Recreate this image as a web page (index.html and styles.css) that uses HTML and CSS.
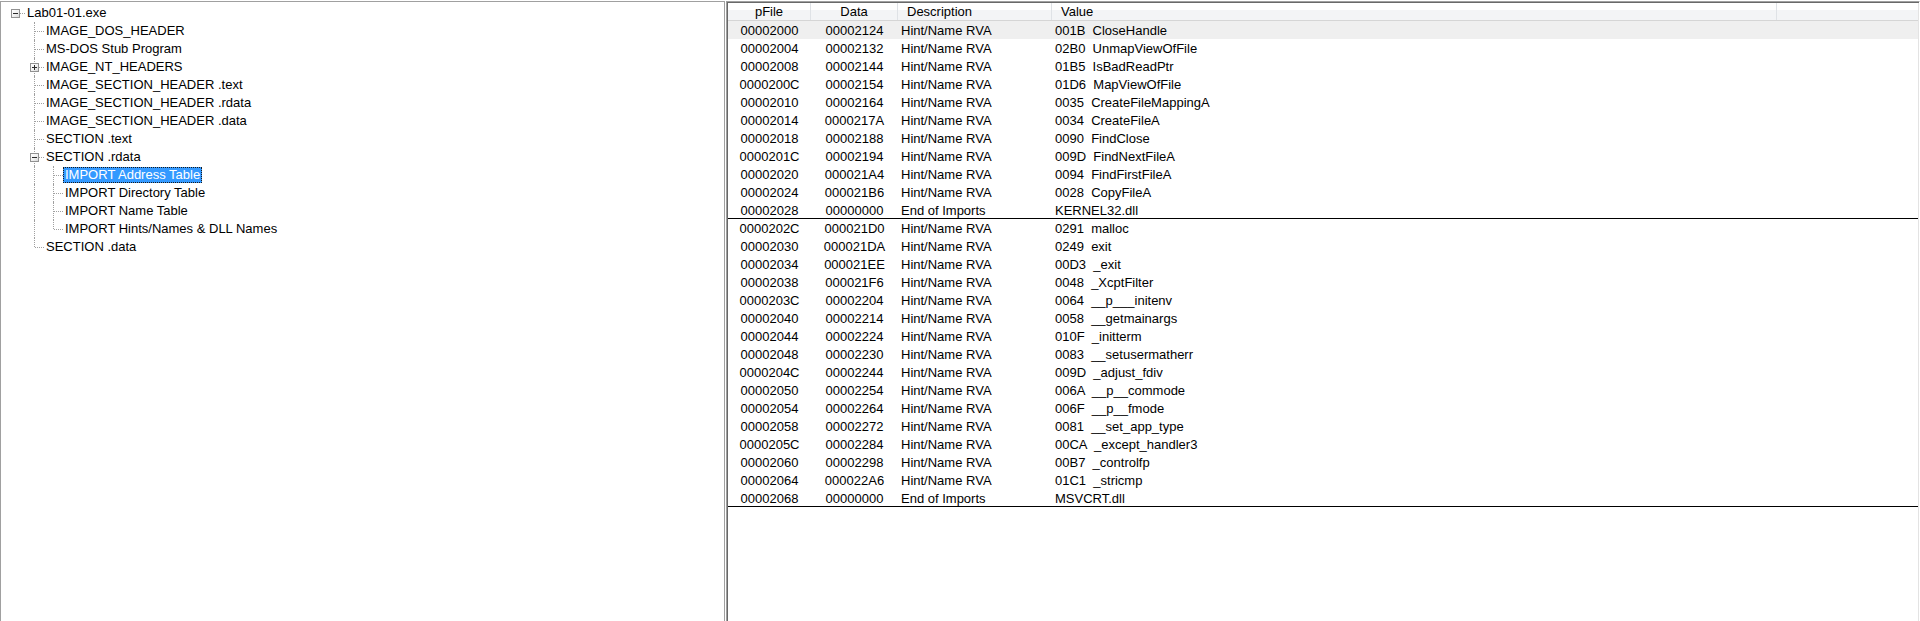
FILE: index.html
```html
<!DOCTYPE html>
<html>
<head>
<meta charset="utf-8">
<link rel="stylesheet" href="styles.css">
</head>
<body>
<div class="app">
  <div class="tree-pane">
    <div class="tree">
      <div class="node"><span class="cell root"><span class="box minus"></span></span><span class="label">Lab01-01.exe</span></div>
      <div class="node"><span class="cell"></span><span class="cell tee"></span><span class="label">IMAGE_DOS_HEADER</span></div>
      <div class="node"><span class="cell"></span><span class="cell tee"></span><span class="label">MS-DOS Stub Program</span></div>
      <div class="node"><span class="cell"></span><span class="cell tee"><span class="box plus"></span></span><span class="label">IMAGE_NT_HEADERS</span></div>
      <div class="node"><span class="cell"></span><span class="cell tee"></span><span class="label">IMAGE_SECTION_HEADER .text</span></div>
      <div class="node"><span class="cell"></span><span class="cell tee"></span><span class="label">IMAGE_SECTION_HEADER .rdata</span></div>
      <div class="node"><span class="cell"></span><span class="cell tee"></span><span class="label">IMAGE_SECTION_HEADER .data</span></div>
      <div class="node"><span class="cell"></span><span class="cell tee"></span><span class="label">SECTION .text</span></div>
      <div class="node"><span class="cell"></span><span class="cell tee"><span class="box minus"></span></span><span class="label">SECTION .rdata</span></div>
      <div class="node"><span class="cell"></span><span class="cell pipe"></span><span class="cell tee"></span><span class="label selected">IMPORT Address Table</span></div>
      <div class="node"><span class="cell"></span><span class="cell pipe"></span><span class="cell tee"></span><span class="label">IMPORT Directory Table</span></div>
      <div class="node"><span class="cell"></span><span class="cell pipe"></span><span class="cell tee"></span><span class="label">IMPORT Name Table</span></div>
      <div class="node"><span class="cell"></span><span class="cell pipe"></span><span class="cell ell"></span><span class="label">IMPORT Hints/Names &amp; DLL Names</span></div>
      <div class="node"><span class="cell"></span><span class="cell ell"></span><span class="label">SECTION .data</span></div>
    </div>
  </div>
  <div class="list-pane">
    <div class="list-header">
      <div class="hcol center">pFile</div>
      <div class="hcol center">Data</div>
      <div class="hcol left">Description</div>
      <div class="hcol left">Value</div>
      <div class="hcol filler"></div>
    </div>
    <div class="list-body">
      <div class="row hover"><span class="c">00002000</span><span class="c">00002124</span><span class="l">Hint/Name RVA</span><span class="l v">001B  CloseHandle</span></div>
      <div class="row"><span class="c">00002004</span><span class="c">00002132</span><span class="l">Hint/Name RVA</span><span class="l v">02B0  UnmapViewOfFile</span></div>
      <div class="row"><span class="c">00002008</span><span class="c">00002144</span><span class="l">Hint/Name RVA</span><span class="l v">01B5  IsBadReadPtr</span></div>
      <div class="row"><span class="c">0000200C</span><span class="c">00002154</span><span class="l">Hint/Name RVA</span><span class="l v">01D6  MapViewOfFile</span></div>
      <div class="row"><span class="c">00002010</span><span class="c">00002164</span><span class="l">Hint/Name RVA</span><span class="l v">0035  CreateFileMappingA</span></div>
      <div class="row"><span class="c">00002014</span><span class="c">0000217A</span><span class="l">Hint/Name RVA</span><span class="l v">0034  CreateFileA</span></div>
      <div class="row"><span class="c">00002018</span><span class="c">00002188</span><span class="l">Hint/Name RVA</span><span class="l v">0090  FindClose</span></div>
      <div class="row"><span class="c">0000201C</span><span class="c">00002194</span><span class="l">Hint/Name RVA</span><span class="l v">009D  FindNextFileA</span></div>
      <div class="row"><span class="c">00002020</span><span class="c">000021A4</span><span class="l">Hint/Name RVA</span><span class="l v">0094  FindFirstFileA</span></div>
      <div class="row"><span class="c">00002024</span><span class="c">000021B6</span><span class="l">Hint/Name RVA</span><span class="l v">0028  CopyFileA</span></div>
      <div class="row end"><span class="c">00002028</span><span class="c">00000000</span><span class="l">End of Imports</span><span class="l v">KERNEL32.dll</span></div>
      <div class="row"><span class="c">0000202C</span><span class="c">000021D0</span><span class="l">Hint/Name RVA</span><span class="l v">0291  malloc</span></div>
      <div class="row"><span class="c">00002030</span><span class="c">000021DA</span><span class="l">Hint/Name RVA</span><span class="l v">0249  exit</span></div>
      <div class="row"><span class="c">00002034</span><span class="c">000021EE</span><span class="l">Hint/Name RVA</span><span class="l v">00D3  _exit</span></div>
      <div class="row"><span class="c">00002038</span><span class="c">000021F6</span><span class="l">Hint/Name RVA</span><span class="l v">0048  _XcptFilter</span></div>
      <div class="row"><span class="c">0000203C</span><span class="c">00002204</span><span class="l">Hint/Name RVA</span><span class="l v">0064  __p___initenv</span></div>
      <div class="row"><span class="c">00002040</span><span class="c">00002214</span><span class="l">Hint/Name RVA</span><span class="l v">0058  __getmainargs</span></div>
      <div class="row"><span class="c">00002044</span><span class="c">00002224</span><span class="l">Hint/Name RVA</span><span class="l v">010F  _initterm</span></div>
      <div class="row"><span class="c">00002048</span><span class="c">00002230</span><span class="l">Hint/Name RVA</span><span class="l v">0083  __setusermatherr</span></div>
      <div class="row"><span class="c">0000204C</span><span class="c">00002244</span><span class="l">Hint/Name RVA</span><span class="l v">009D  _adjust_fdiv</span></div>
      <div class="row"><span class="c">00002050</span><span class="c">00002254</span><span class="l">Hint/Name RVA</span><span class="l v">006A  __p__commode</span></div>
      <div class="row"><span class="c">00002054</span><span class="c">00002264</span><span class="l">Hint/Name RVA</span><span class="l v">006F  __p__fmode</span></div>
      <div class="row"><span class="c">00002058</span><span class="c">00002272</span><span class="l">Hint/Name RVA</span><span class="l v">0081  __set_app_type</span></div>
      <div class="row"><span class="c">0000205C</span><span class="c">00002284</span><span class="l">Hint/Name RVA</span><span class="l v">00CA  _except_handler3</span></div>
      <div class="row"><span class="c">00002060</span><span class="c">00002298</span><span class="l">Hint/Name RVA</span><span class="l v">00B7  _controlfp</span></div>
      <div class="row"><span class="c">00002064</span><span class="c">000022A6</span><span class="l">Hint/Name RVA</span><span class="l v">01C1  _stricmp</span></div>
      <div class="row end"><span class="c">00002068</span><span class="c">00000000</span><span class="l">End of Imports</span><span class="l v">MSVCRT.dll</span></div>
    </div>
  </div>
</div>
</body>
</html>
```
FILE: styles.css
```css
html, body {
  margin: 0;
  padding: 0;
  background: #ffffff;
  overflow: hidden;
}
body {
  padding-top: 1px;
  font-family: "Liberation Sans", Arial, sans-serif;
  font-size: 13px;
  color: #000;
}
.app {
  display: flex;
  height: 630px;
  gap: 1px;
}

/* ---------- tree pane ---------- */
.tree-pane {
  width: 724px;
  flex: none;
  border: 1px solid #a0a0a0;
  padding: 2px 0 0 5px;
  box-sizing: border-box;
  width: 725px;
}
.tree {
  display: flex;
  flex-direction: column;
}
.node {
  display: flex;
  height: 18px;
  align-items: flex-start;
}
.cell {
  position: relative;
  width: 19px;
  height: 18px;
  flex: none;
}
.cell.tee::before,
.cell.pipe::before,
.cell.ell::before {
  content: "";
  position: absolute;
  left: 9px;
  top: 0;
  height: 18px;
  border-left: 1px dotted #a0a0a0;
}
.cell.ell::before {
  height: 9px;
}
.cell.tee::after,
.cell.ell::after {
  content: "";
  position: absolute;
  left: 10px;
  top: 9px;
  width: 9px;
  border-top: 1px dotted #a0a0a0;
}
.cell.root::after {
  content: "";
  position: absolute;
  left: 14px;
  top: 9px;
  width: 5px;
  border-top: 1px dotted #a0a0a0;
}
.box {
  position: absolute;
  left: 5px;
  top: 5px;
  width: 9px;
  height: 9px;
  box-sizing: border-box;
  border: 1px solid #919191;
  background: linear-gradient(135deg, #ffffff 0%, #f0f0f0 55%, #d8d8d8 100%);
  z-index: 1;
}
.box::before {
  content: "";
  position: absolute;
  left: 1px;
  top: 3px;
  width: 5px;
  height: 1px;
  background: #2a2a2a;
}
.box.plus::after {
  content: "";
  position: absolute;
  left: 3px;
  top: 1px;
  width: 1px;
  height: 5px;
  background: #2a2a2a;
}
.label {
  line-height: 18px;
  height: 18px;
  padding: 0 2px;
  white-space: nowrap;
  box-sizing: border-box;
}
.label.selected {
  background: #3399ff;
  color: #fff;
  height: 16px;
  line-height: 16px;
  margin-top: 1px;
  outline: 1px dotted #1a1a1a;
  outline-offset: -1px;
}

/* ---------- list pane ---------- */
.list-pane {
  flex: 1;
  border: 1px solid;
  border-color: #a0a0a0 #ffffff #ffffff #a0a0a0;
  box-shadow: inset 1px 1px 0 #696969, inset -1px -1px 0 #e3e3e3;
  padding: 1px;
  display: flex;
  flex-direction: column;
}
.list-header,
.row {
  display: grid;
  grid-template-columns: 83px 87px 154px 725px 1fr;
}
.list-header {
  height: 18px;
  box-sizing: border-box;
  border-bottom: 1px solid #d5d5d5;
  background: linear-gradient(#ffffff 0, #ffffff 7px, #f3f4f6 7px, #f3f4f6 100%);
}
.hcol {
  border-right: 1px solid #dfe2e6;
  line-height: 17px;
  white-space: nowrap;
  overflow: hidden;
}
.hcol.center { text-align: center; }
.hcol.left { padding-left: 9px; }
.hcol.filler { border-right: none; }

.row {
  height: 18px;
  box-sizing: border-box;
  padding-top: 2px;
  line-height: 16px;
}
.row.hover { background: #efefef; }
.row.end { border-bottom: 1px solid #000; }
.row span {
  white-space: pre;
  overflow: hidden;
}
.row .c { text-align: center; }
.row .l { padding-left: 3px; }
```
